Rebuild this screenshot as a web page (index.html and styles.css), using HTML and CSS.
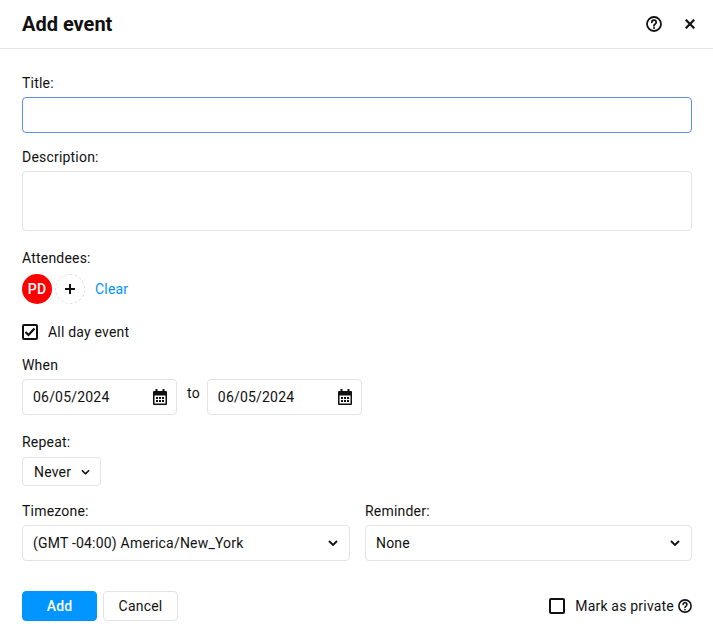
FILE: index.html
```html
<!DOCTYPE html>
<html lang="en">
  <head>
    <meta charset="UTF-8" />
    <meta name="viewport" content="width=device-width, initial-scale=1.0" />
    <title>Add event</title>
    <link rel="stylesheet" href="styles.css">
  </head>
  <body>
    <header class="modal-head">
      <h1>Add event</h1>
      <div class="head-icons">
        <svg width="16" height="16" viewBox="0 0 16 16" fill="none" stroke="#111" stroke-width="1.8">
          <circle cx="8" cy="8" r="7"/>
          <path d="M5.8 6.3a2.2 2.2 0 1 1 3.4 1.8c-.8.5-1.2.9-1.2 1.7" stroke-linecap="round"/>
          <circle cx="8" cy="12" r="1" fill="#111" stroke="none"/>
        </svg>
        <svg width="10" height="10" viewBox="0 0 10 10" fill="none" stroke="#111" stroke-width="2.2">
          <path d="M.7.7l8.6 8.6M9.3.7L.7 9.3"/>
        </svg>
      </div>
    </header>

    <form class="modal-body">
      <div class="field">
        <label>Title:</label>
        <input class="input input-focus" type="text">
      </div>

      <div class="field description">
        <label>Description:</label>
        <textarea class="input input-area"></textarea>
      </div>

      <div class="field">
        <label class="label-attendees">Attendees:</label>
        <div class="attendees">
          <span class="avatar">PD</span>
          <span class="avatar-add">
            <svg width="10" height="10" viewBox="0 0 10 10" stroke="#111" stroke-width="2"><path d="M5 0v10M0 5h10"/></svg>
          </span>
          <a class="link-clear">Clear</a>
        </div>
      </div>

      <div class="check-row all-day">
        <span class="check">
          <svg width="12" height="10" viewBox="0 0 12 10" fill="none" stroke="#111" stroke-width="2.2"><path d="M1.500 5l3 3 6-6.500"/></svg>
        </span>
        <span>All day event</span>
      </div>

      <div class="field when">
        <label>When</label>
        <div class="date-row">
          <div class="select date">
            <span>06/05/2024</span>
            <svg width="14" height="16" viewBox="0 0 14 16"><use href="#cal"/></svg>
          </div>
          <span class="to">to</span>
          <div class="select date">
            <span>06/05/2024</span>
            <svg width="14" height="16" viewBox="0 0 14 16"><use href="#cal"/></svg>
          </div>
        </div>
      </div>

      <div class="field repeat">
        <label>Repeat:</label>
        <div class="select select-small">
          <span>Never</span>
          <svg width="9" height="6" viewBox="0 0 10 6"><use href="#chev"/></svg>
        </div>
      </div>

      <div class="two-col">
        <div class="field">
          <label>Timezone:</label>
          <div class="select">
            <span>(GMT -04:00) America/New_York</span>
            <svg width="10" height="6" viewBox="0 0 10 6"><use href="#chev"/></svg>
          </div>
        </div>
        <div class="field">
          <label>Reminder:</label>
          <div class="select">
            <span>None</span>
            <svg width="10" height="6" viewBox="0 0 10 6"><use href="#chev"/></svg>
          </div>
        </div>
      </div>

      <div class="actions">
        <button class="button button-primary" type="button">Add</button>
        <button class="button" type="button">Cancel</button>
        <div class="check-row private">
          <span class="check"></span>
          <span>Mark as private</span>
          <svg width="14" height="14" viewBox="0 0 16 16" fill="none" stroke="#111" stroke-width="1.8">
            <circle cx="8" cy="8" r="7"/>
            <path d="M5.8 6.3a2.2 2.2 0 1 1 3.4 1.8c-.8.5-1.2.9-1.2 1.7" stroke-linecap="round"/>
            <circle cx="8" cy="12" r="1" fill="#111" stroke="none"/>
          </svg>
        </div>
      </div>
    </form>

    <!-- shared icons -->
    <svg class="defs" width="0" height="0">
      <symbol id="cal" viewBox="0 0 14 16">
        <path fill="#111" fill-rule="evenodd" d="M2.500 0h2v2h5V0h2v2H13a1 1 0 0 1 1 1v12a1 1 0 0 1-1 1H1a1 1 0 0 1-1-1V3a1 1 0 0 1 1-1h1.500zM1.500 6.500v8h11v-8z"/>
        <path fill="#111" d="M3 8h2v2H3zM6 8h2v2H6zM9 8h2v2H9zM3 11h2v2H3zM6 11h2v2H6zM9 11h2v2H9z"/>
      </symbol>
      <symbol id="chev" viewBox="0 0 10 6">
        <path d="M1 1l4 4 4-4" fill="none" stroke="#111" stroke-width="1.800"/>
      </symbol>
    </svg>
  </body>
</html>
```

FILE: styles.css
```css
* {
  box-sizing: border-box;
}
body {
  margin: 0;
  background: #fff;
  color: #111;
  font-family: Roboto, "Liberation Sans", sans-serif;
  font-size: 14px;
  line-height: 20px;
  letter-spacing: 0.2px;
}
h1 {
  margin: 0;
  font-size: 20px;
  font-weight: 700;
  letter-spacing: 0;
}
label {
  display: block;
  margin-bottom: 4px;
}
svg {
  display: block;
  flex: none;
}
.defs {
  position: absolute;
}
.modal-head {
  display: flex;
  align-items: center;
  justify-content: space-between;
  height: 49px;
  padding: 0 18px 1px 22px;
  border-bottom: 1px solid #e4e4e4;
}
.head-icons {
  display: flex;
  align-items: center;
  gap: 23px;
}
.modal-body {
  padding: 24px 21px 0 22px;
}
.field {
  margin-bottom: 14px;
}
.description {
  margin-bottom: 17px;
}
.label-attendees {
  margin-bottom: 6px;
}
.input {
  display: block;
  width: 100%;
  height: 36px;
  border: 1px solid #e4e4e4;
  border-radius: 4px;
  outline: none;
  background: #fff;
  resize: none;
}
.input-focus {
  border-color: #5b8def;
}
.input-area {
  height: 60px;
}
.attendees {
  display: flex;
  align-items: center;
}
.avatar {
  display: flex;
  align-items: center;
  justify-content: center;
  width: 30px;
  height: 30px;
  border-radius: 50%;
  background: #ff0000;
  color: #fff;
  font-weight: 500;
}
.avatar-add {
  display: flex;
  align-items: center;
  justify-content: center;
  width: 30px;
  height: 30px;
  margin-left: 3px;
  border: 1px dashed #e0e0e0;
  border-radius: 50%;
}
.link-clear {
  margin-left: 10px;
  color: #0095ff;
}
.check-row {
  display: flex;
  align-items: center;
}
.check {
  display: flex;
  align-items: center;
  justify-content: center;
  width: 16px;
  height: 16px;
  margin-right: 10px;
  border: 2px solid #111;
  border-radius: 2px;
}
.all-day {
  margin: 18px 0 13px;
}
.when {
  margin-bottom: 17px;
}
.date-row {
  display: flex;
  align-items: flex-start;
}
.to {
  margin: 4px 7px 0 10px;
}
.select {
  display: flex;
  align-items: center;
  justify-content: space-between;
  height: 36px;
  padding: 0 11px 0 10px;
  border: 1px solid #e4e4e4;
  border-radius: 4px;
  background: #fff;
}
.date {
  width: 155px;
  padding-right: 9px;
}
.repeat {
  margin-bottom: 15px;
}
.repeat label {
  margin-bottom: 5px;
}
.select-small {
  width: 79px;
  height: 29px;
  padding: 0 10px 0 11px;
}
.two-col {
  display: grid;
  grid-template-columns: 328px 327px;
  gap: 15px;
}
.two-col .field {
  margin-bottom: 30px;
}
.actions {
  display: flex;
  align-items: center;
  gap: 6px;
}
.button {
  width: 75px;
  height: 30px;
  padding: 0;
  border: 1px solid #e4e4e4;
  border-radius: 4px;
  background: #fff;
  color: #111;
  font: inherit;
  letter-spacing: inherit;
}
.button-primary {
  border-color: #0095ff;
  background: #0095ff;
  color: #fff;
  font-weight: 500;
}
.private {
  margin-left: auto;
}
.private svg {
  margin-left: 4px;
}
```
